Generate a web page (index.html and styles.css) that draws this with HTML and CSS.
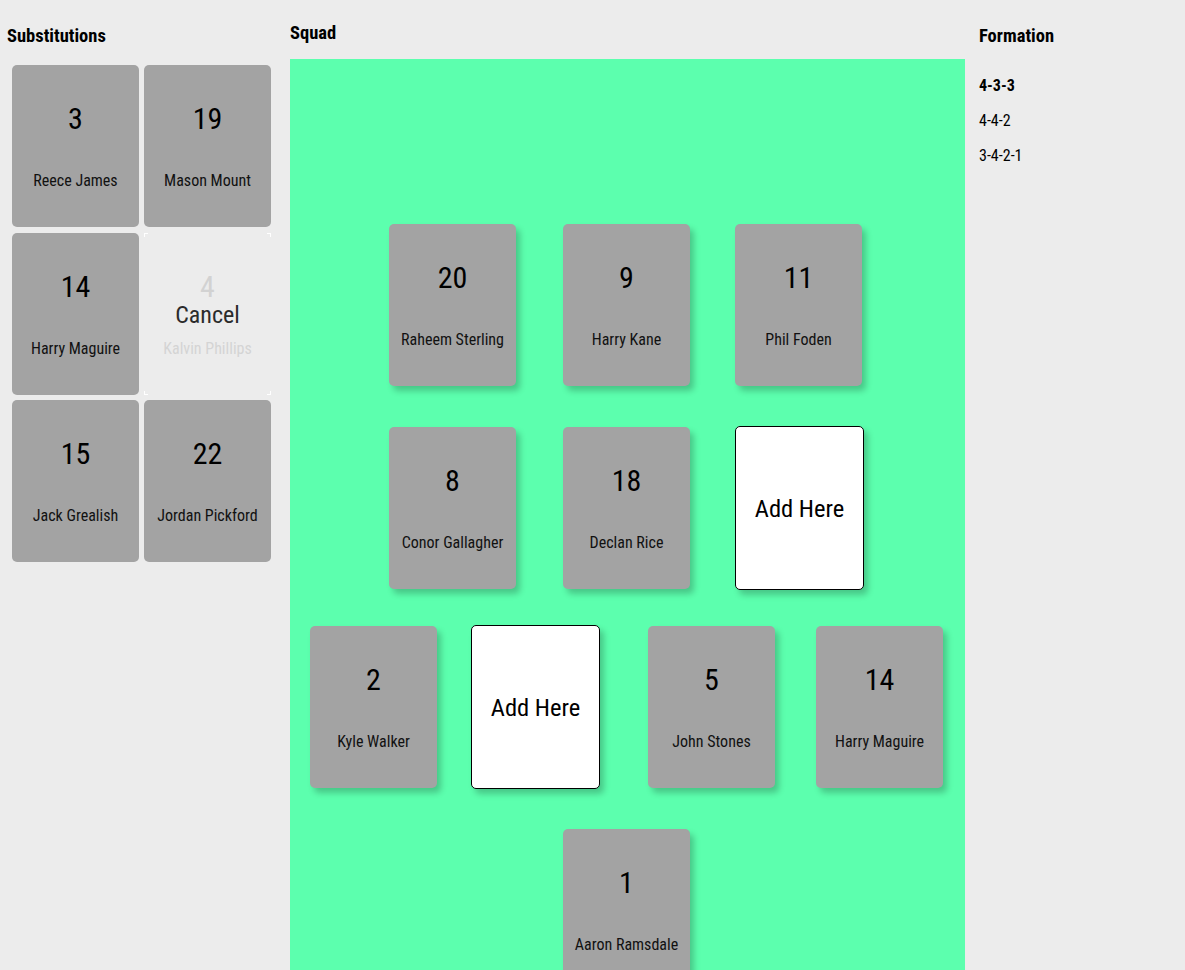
FILE: index.html
```html
<!DOCTYPE html>
<html lang="en">
<head>
<meta charset="utf-8">
<title>Squad builder</title>
<link rel="stylesheet" href="styles.css">
</head>
<body>
<div class="app">
  <section class="col col-subs">
    <h3 class="title">Substitutions</h3>
    <div class="subs-grid">
      <div class="card"><div class="num">3</div><div class="name">Reece James</div></div>
      <div class="card"><div class="num">19</div><div class="name">Mason Mount</div></div>
      <div class="card"><div class="num">14</div><div class="name">Harry Maguire</div></div>
      <div class="card card-ghost"><div class="num">4</div><div class="name">Kalvin Phillips</div><div class="cancel">Cancel</div></div>
      <div class="card"><div class="num">15</div><div class="name">Jack Grealish</div></div>
      <div class="card"><div class="num">22</div><div class="name">Jordan Pickford</div></div>
    </div>
  </section>

  <section class="col col-squad">
    <h3 class="title">Squad</h3>
    <div class="field">
      <div class="row row-fwd">
        <div class="card card-pitch"><div class="num">20</div><div class="name">Raheem Sterling</div></div>
        <div class="card card-pitch"><div class="num">9</div><div class="name">Harry Kane</div></div>
        <div class="card card-pitch"><div class="num">11</div><div class="name">Phil Foden</div></div>
      </div>
      <div class="row row-mid">
        <div class="card card-pitch"><div class="num">8</div><div class="name">Conor Gallagher</div></div>
        <div class="card card-pitch"><div class="num">18</div><div class="name">Declan Rice</div></div>
        <div class="card card-add">Add Here</div>
      </div>
      <div class="row row-def">
        <div class="card card-pitch"><div class="num">2</div><div class="name">Kyle Walker</div></div>
        <div class="card card-add">Add Here</div>
        <div class="card card-pitch"><div class="num">5</div><div class="name">John Stones</div></div>
        <div class="card card-pitch"><div class="num">14</div><div class="name">Harry Maguire</div></div>
      </div>
      <div class="row row-gk">
        <div class="card card-pitch"><div class="num">1</div><div class="name">Aaron Ramsdale</div></div>
      </div>
    </div>
  </section>

  <section class="col col-form">
    <h3 class="title">Formation</h3>
    <ul class="forms">
      <li class="active">4-3-3</li>
      <li>4-4-2</li>
      <li>3-4-2-1</li>
    </ul>
  </section>
</div>
</body>
</html>
```

FILE: styles.css
```css
html, body {
  margin: 0;
  padding: 0;
  background: #ececec;
  font-family: "Roboto Condensed", Roboto, "Liberation Sans", sans-serif;
  font-stretch: condensed;
  color: #000;
}

.app {
  display: grid;
  grid-template-columns: 290px 675px 220px;
  min-height: 970px;
}

.title {
  margin: 0;
  font-size: 18.5px;
  line-height: 22px;
  font-weight: 700;
}

.col-subs { padding: 25px 0 0 7px; }
.col-squad { padding-top: 22px; display: flex; flex-direction: column; }
.col-form { padding: 25px 0 0 14px; }

.subs-grid {
  margin: 18px 0 0 5px;
  display: grid;
  grid-template-columns: 127px 127px;
  grid-auto-rows: 162px;
  column-gap: 5px;
  row-gap: 5.5px;
}

.card {
  width: 127px;
  height: 162px;
  box-sizing: border-box;
  background: #a3a3a3;
  border-radius: 5px;
  text-align: center;
  padding-top: 36px;
  position: relative;
}

.num {
  font-size: 30px;
  line-height: 36px;
}

.name {
  margin-top: 34px;
  font-size: 16px;
  line-height: 19px;
  color: #111;
}

.card-ghost {
  background:
    linear-gradient(#fff, #fff) left top / 4px 1px no-repeat,
    linear-gradient(#fff, #fff) left top / 1px 4px no-repeat,
    linear-gradient(#fff, #fff) right top / 4px 1px no-repeat,
    linear-gradient(#fff, #fff) right top / 1px 4px no-repeat,
    linear-gradient(#fff, #fff) left bottom / 4px 1px no-repeat,
    linear-gradient(#fff, #fff) left bottom / 1px 4px no-repeat,
    linear-gradient(#fff, #fff) right bottom / 4px 1px no-repeat,
    linear-gradient(#fff, #fff) right bottom / 1px 4px no-repeat,
    #ececec;
  border-radius: 0;
}
.card-ghost .num { color: #d2d2d2; }
.card-ghost .name { color: #d4d4d4; margin-top: 34px; }

.cancel {
  position: absolute;
  left: 0;
  right: 0;
  top: 67px;
  font-size: 24px;
  line-height: 30px;
  color: #2b2b2b;
}

.field {
  margin-top: 15px;
  background: #5cffae;
  flex: 1;
  padding: 165px 0 40px;
  display: flex;
  flex-direction: column;
}

.row {
  display: flex;
  align-items: center;
  min-height: 164px;
}
.row-fwd { padding-left: 99px; gap: 47px; margin-top: -1px; }
.row-fwd > :nth-child(3) { margin-left: -2px; }
.row-mid { padding-left: 99px; gap: 47px; margin-top: 39px; }
.row-mid > :nth-child(3) { margin-left: -2px; }
.row-def { padding-left: 20px; gap: 34px; margin-top: 35px; }
.row-def > :nth-child(3) { margin-left: 14px; }
.row-def > :nth-child(4) { margin-left: 7px; }
.row-gk { padding-left: 273px; margin-top: 39px; }

.card-pitch {
  box-shadow: 4px 5px 6px rgba(0, 0, 0, 0.22);
}

.card-add {
  width: 129px;
  height: 164px;
  padding: 0;
  background: #fff;
  border: 1px solid #000;
  display: flex;
  align-items: center;
  justify-content: center;
  font-size: 24.5px;
  box-shadow: 4px 5px 6px rgba(0, 0, 0, 0.22);
}

.forms {
  list-style: none;
  margin: 21px 0 0;
  padding: 0;
}
.forms li {
  font-size: 16px;
  line-height: 35px;
}
.forms li.active { font-weight: 700; }
```
